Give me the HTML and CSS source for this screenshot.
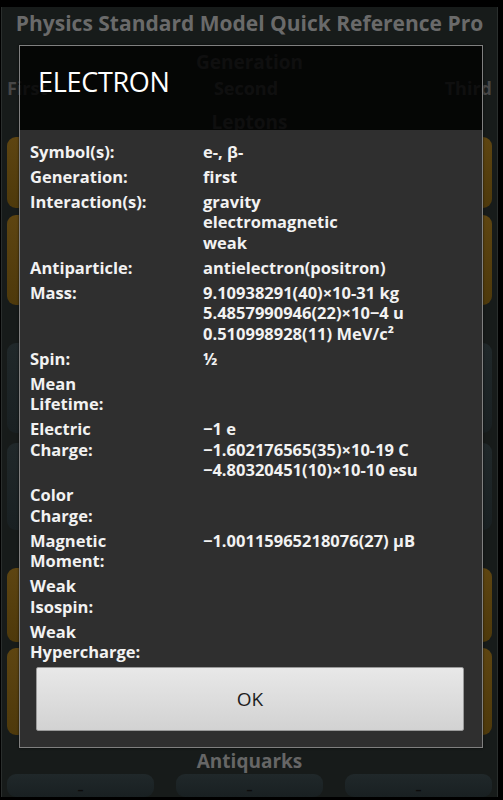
FILE: index.html
```html
<!DOCTYPE html>
<html lang="en">
<head>
    <meta charset="UTF-8">
    <meta name="viewport" content="width=device-width, initial-scale=1.0">
    <title>Physics Standard Model Quick Reference Pro</title>
    <link rel="stylesheet" href="styles.css">
</head>
<body>
    <div class="screen">
        <h1 class="app-title">Physics Standard Model Quick Reference Pro</h1>
        <div class="section-title">Generation</div>
        <div class="columns">
            <span>First</span>
            <span>Second</span>
            <span>Third</span>
        </div>
        <div class="section-title leptons">Leptons</div>
        <div class="grid">
            <div class="tile lepton row-a"></div>
            <div class="tile lepton row-a"></div>
            <div class="tile lepton row-a"></div>
            <div class="tile lepton row-b"></div>
            <div class="tile lepton row-b"></div>
            <div class="tile lepton row-b"></div>
        </div>
        <!-- quarks header sits under the dialog -->
        <div class="spacer"></div>
        <div class="grid wide-gap">
            <div class="tile quark row-c"></div>
            <div class="tile quark row-c"></div>
            <div class="tile quark row-c"></div>
            <div class="tile quark row-d"></div>
            <div class="tile quark row-d"></div>
            <div class="tile quark row-d"></div>
        </div>
        <div class="spacer"></div>
        <div class="grid narrow-gap">
            <div class="tile lepton row-e"></div>
            <div class="tile lepton row-e"></div>
            <div class="tile lepton row-e"></div>
            <div class="tile lepton row-f"></div>
            <div class="tile lepton row-f"></div>
            <div class="tile lepton row-f"></div>
        </div>
        <div class="section-title antiquarks">Antiquarks</div>
        <div class="grid">
            <div class="tile quark bottom">–</div>
            <div class="tile quark bottom">–</div>
            <div class="tile quark bottom">–</div>
        </div>
    </div>

    <!-- particle details dialog -->
    <div class="dialog">
        <div class="dialog-title">ELECTRON</div>
        <div class="dialog-body">
            <dl class="props">
                <dt>Symbol(s):</dt>
                <dd>e-, β-</dd>
                <dt>Generation:</dt>
                <dd>first</dd>
                <dt>Interaction(s):</dt>
                <dd>gravity<br>electromagnetic<br>weak</dd>
                <dt>Antiparticle:</dt>
                <dd>antielectron(positron)</dd>
                <dt>Mass:</dt>
                <dd>9.10938291(40)×10-31 kg<br>5.4857990946(22)×10−4 u<br>0.510998928(11) MeV/c²</dd>
                <dt>Spin:</dt>
                <dd>½</dd>
                <dt>Mean<br>Lifetime:</dt>
                <dd></dd>
                <dt>Electric<br>Charge:</dt>
                <dd>−1 e<br>−1.602176565(35)×10-19 C<br>−4.80320451(10)×10-10 esu</dd>
                <dt>Color<br>Charge:</dt>
                <dd></dd>
                <dt>Magnetic<br>Moment:</dt>
                <dd>−1.00115965218076(27) μB</dd>
                <dt>Weak<br>Isospin:</dt>
                <dd></dd>
                <dt>Weak<br>Hypercharge:</dt>
                <dd></dd>
            </dl>
            <button class="ok-button">OK</button>
        </div>
    </div>
</body>
</html>
```

FILE: styles.css
```css
body {
    margin: 0;
    background-color: #000;
    font-family: "Open Sans", "DejaVu Sans", sans-serif;
}

.screen {
    width: 497px;
    height: 790px;
    margin: 7px 0 0 1px;
    padding: 0 5px;
    box-sizing: border-box;
    background-color: #171b1a;
    border-left: 1px solid #2a2e2d;
    border-right: 1px solid #2a2e2d;
    overflow: hidden;
}

.app-title {
    margin: 0 0 12px 0;
    padding-top: 2px;
    font-size: 21px;
    font-weight: bold;
    color: #6a6a6a;
    text-align: center;
    line-height: 28px;
    white-space: nowrap;
}

.section-title {
    font-size: 19px;
    font-weight: bold;
    color: #444;
    text-align: center;
    line-height: 26px;
}

.columns {
    display: flex;
    justify-content: space-between;
    font-size: 18px;
    font-weight: bold;
    color: #474747;
    line-height: 26px;
    margin-bottom: 8px;
}

.antiquarks {
    padding-top: 13px;
    color: #666;
}

.spacer {
    height: 38px;
}

.grid {
    display: grid;
    grid-template-columns: repeat(3, 147px);
    justify-content: space-between;
    row-gap: 7px;
}

.grid.wide-gap {
    row-gap: 10px;
}

.grid.narrow-gap {
    row-gap: 6px;
}

.tile {
    border-radius: 9px;
}

.lepton {
    background: linear-gradient(#5e4511, #4e390b);
}

.quark {
    background: linear-gradient(#20282a, #192022);
}

.row-a { height: 71px; margin-top: 2px; }
.row-b { height: 90px; }
.row-c { height: 90px; }
.row-d { height: 87px; }
.row-e { height: 74px; }
.row-f { height: 87px; }

.bottom {
    height: 23px;
    box-sizing: border-box;
    padding-top: 9px;
    color: #0c0c0c;
    font-size: 12px;
    font-weight: bold;
    text-align: center;
    line-height: 14px;
}

/* dialog over the dimmed screen */
.dialog {
    position: absolute;
    left: 19px;
    top: 45px;
    width: 464px;
    box-sizing: border-box;
    border: 1px solid #808080;
    box-shadow: 0 0 2px rgba(0, 0, 0, 0.8);
}

.dialog-title {
    height: 84px;
    box-sizing: border-box;
    padding: 15.5px 0 0 18px;
    background-color: rgba(0, 0, 0, 0.78);
    color: #fff;
    font-size: 27px;
    letter-spacing: -0.3px;
    line-height: 40px;
}

.dialog-body {
    background-color: #2f2f2f;
    padding: 11.5px 17px 16px 10px;
}

.props {
    display: grid;
    grid-template-columns: 173px 1fr;
    margin: 0;
    font-size: 16.5px;
    font-weight: bold;
    line-height: 20.5px;
    color: #f2f2f2;
}

.props dt,
.props dd {
    margin: 0 0 4.5px 0;
}

.ok-button {
    display: block;
    width: 428px;
    height: 64px;
    margin-left: 6px;
    border: 1px solid #9a9a9a;
    border-radius: 2px;
    background: linear-gradient(#e8e8e8, #d2d2d2);
    font-family: "Open Sans", "DejaVu Sans", sans-serif;
    font-size: 19px;
    color: #1e1e1e;
}
```
